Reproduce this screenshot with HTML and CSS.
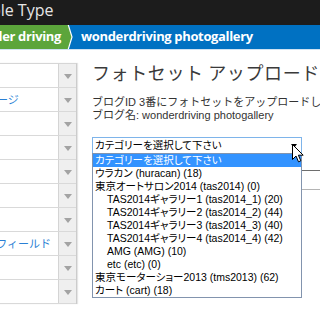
FILE: index.html
```html
<!DOCTYPE html>
<html lang="ja">
<head>
<meta charset="utf-8">
<title>フォトセット アップロード</title>
<link rel="stylesheet" href="styles.css">
</head>
<body>
<header class="topbar"><span class="brand">Movable Type</span></header>
<nav class="crumbs">
  <div class="crumb-site"><span>wonder driving</span></div>
  <svg class="chev" width="12" height="24" viewBox="0 0 12 24"><polygon points="0,0 4,0 8,12 4,24 0,24" fill="#5ca53b"/><polyline points="4,-1 8,12 4,25" fill="none" stroke="#ffffff" stroke-width="1.2"/></svg>
  <div class="crumb-blog">wonderdriving photogallery</div>
</nav>
<div class="main">
  <aside class="sidenav">
    <div class="row"><span class="label"></span><span class="btn"><i class="tri"></i></span></div>
    <div class="row"><span class="label">ウェブページ</span><span class="btn"><i class="tri"></i></span></div>
    <div class="row"><span class="label"></span><span class="btn"><i class="tri"></i></span></div>
    <div class="row"><span class="label"></span><span class="btn"><i class="tri"></i></span></div>
    <div class="row"><span class="label"></span><span class="btn"><i class="tri"></i></span></div>
    <div class="row"><span class="label"></span><span class="btn"><i class="tri"></i></span></div>
    <div class="row"><span class="label"></span><span class="btn"><i class="tri"></i></span></div>
    <div class="row"><span class="label">カスタムフィールド</span><span class="btn"><i class="tri"></i></span></div>
    <div class="row"><span class="label"></span><span class="btn"><i class="tri"></i></span></div>
    <div class="row"><span class="label"></span><span class="btn"><i class="tri"></i></span></div>
  </aside>
  <section class="content">
    <h1 class="title">フォトセット アップロード</h1>
    <p class="desc">ブログID 3番にフォトセットをアップロードします。<br>ブログ名: wonderdriving photogallery</p>
    <div class="select-wrap">
      <div class="select"><span>カテゴリーを選択して下さい</span><i class="sel-arrow"></i></div>
      <ul class="options">
        <li class="opt active">カテゴリーを選択して下さい</li>
        <li class="opt">ウラカン (huracan) (18)</li>
        <li class="opt">東京オートサロン2014 (tas2014) (0)</li>
        <li class="opt sub">TAS2014ギャラリー1 (tas2014_1) (20)</li>
        <li class="opt sub">TAS2014ギャラリー2 (tas2014_2) (44)</li>
        <li class="opt sub">TAS2014ギャラリー3 (tas2014_3) (40)</li>
        <li class="opt sub">TAS2014ギャラリー4 (tas2014_4) (42)</li>
        <li class="opt sub">AMG (AMG) (10)</li>
        <li class="opt sub">etc (etc) (0)</li>
        <li class="opt">東京モーターショー2013 (tms2013) (62)</li>
        <li class="opt">カート (cart) (18)</li>
      </ul>
      <svg class="cursor" width="12" height="19" viewBox="0 0 12 19"><path d="M0.5,0.5 L0.5,15.5 L4,12 L6.5,17.8 L8.8,16.8 L6.4,11.2 L11.2,11.2 Z" fill="#ffffff" stroke="#000000" stroke-width="1" stroke-linejoin="miter"/></svg>
    </div>
    <div class="field"></div>
  </section>
</div>
</body>
</html>
```
FILE: styles.css
```css
* { box-sizing: border-box; }
html, body { margin: 0; padding: 0; background: #ffffff; }
body {
  width: 320px;
  height: 320px;
  overflow: hidden;
  font-family: "Liberation Sans", "Noto Sans CJK JP", sans-serif;
  color: #333333;
}
.topbar {
  height: 25px;
  background: #1c1c1c;
  overflow: hidden;
  white-space: nowrap;
}
.brand {
  display: inline-block;
  margin-left: -50px;
  font-family: "Open Sans", sans-serif;
  font-size: 16px;
  line-height: 21px;
  color: #e6e6e6;
}
.crumbs {
  display: flex;
  height: 25px;
  background: #0071c2;
  border-bottom: 1px solid #cfe2f2;
  font-family: "Open Sans", sans-serif;
  font-weight: 700;
  font-size: 13px;
  letter-spacing: -0.35px;
  line-height: 23px;
  color: #ffffff;
  white-space: nowrap;
}
.crumb-site {
  width: 64px;
  flex: none;
  display: flex;
  justify-content: flex-end;
  overflow: hidden;
  padding-right: 3px;
  background: #5ca53b;
}
.chev { flex: none; display: block; }
.crumb-blog { padding-left: 5px; }
.main {
  display: flex;
  align-items: flex-start;
}
.sidenav {
  flex: none;
  width: 137px;
  margin-left: -60px;
  margin-top: 13px;
  border-top: 1px solid #d6d6d6;
  border-right: 1px solid #cccccc;
  box-shadow: 1px 0 1px #e6e6e6;
}
.row {
  display: flex;
  height: 24px;
  border-bottom: 1px solid #d9d9d9;
}
.label {
  flex: 1;
  padding-left: 13px;
  font-family: "Noto Sans CJK JP", sans-serif;
  font-size: 11px;
  line-height: 23px;
  color: #2a7fd4;
  white-space: nowrap;
  overflow: hidden;
}
.btn {
  width: 18px;
  flex: none;
  background: #efefef;
  border-left: 1px solid #d4d4d4;
  display: flex;
  align-items: center;
  justify-content: center;
}
.tri {
  display: block;
  width: 0;
  height: 0;
  border-left: 4px solid transparent;
  border-right: 4px solid transparent;
  border-top: 5px solid #a3a3a3;
  margin-top: 1px;
}
.content {
  flex: 1;
  padding-left: 15px;
}
.title {
  margin: 10px 0 0;
  font-family: "Noto Sans CJK JP", sans-serif;
  font-weight: 400;
  font-size: 18px;
  line-height: 24px;
  letter-spacing: 0.6px;
  color: #3a3a3a;
  white-space: nowrap;
}
.desc {
  margin: 12px 0 0;
  font-size: 11px;
  line-height: 13px;
  color: #333333;
  white-space: nowrap;
}
.select-wrap {
  position: relative;
  width: 210px;
  margin-top: 15px;
}
.select {
  height: 17px;
  border: 1px solid #7eb4ea;
  padding-left: 2px;
  display: flex;
  align-items: center;
  font-size: 10.5px;
  line-height: 15px;
  color: #000000;
  font-feature-settings: "palt";
  background: #ffffff;
}
.sel-arrow {
  display: block;
  margin-left: auto;
  margin-right: 4px;
  width: 0;
  height: 0;
  border-left: 3.5px solid transparent;
  border-right: 3.5px solid transparent;
  border-top: 4px solid #000000;
}
.options {
  position: absolute;
  top: 16px;
  left: 0;
  width: 210px;
  margin: 0;
  padding: 0;
  list-style: none;
  background: #ffffff;
  border: 1px solid #8294ae;
  z-index: 2;
}
.opt {
  height: 13px;
  padding-left: 2px;
  font-size: 10.5px;
  line-height: 13px;
  color: #000000;
  white-space: nowrap;
  font-feature-settings: "palt";
}
.opt.sub { padding-left: 14px; }
.opt.active { background: #3393ff; color: #ffffff; }
.cursor {
  position: absolute;
  left: 200px;
  top: 7px;
  z-index: 3;
}
.field {
  margin-top: 16px;
  width: 260px;
  height: 20px;
  border: 1px solid #b4b4b4;
  border-top-color: #6e6e6e;
}
```
